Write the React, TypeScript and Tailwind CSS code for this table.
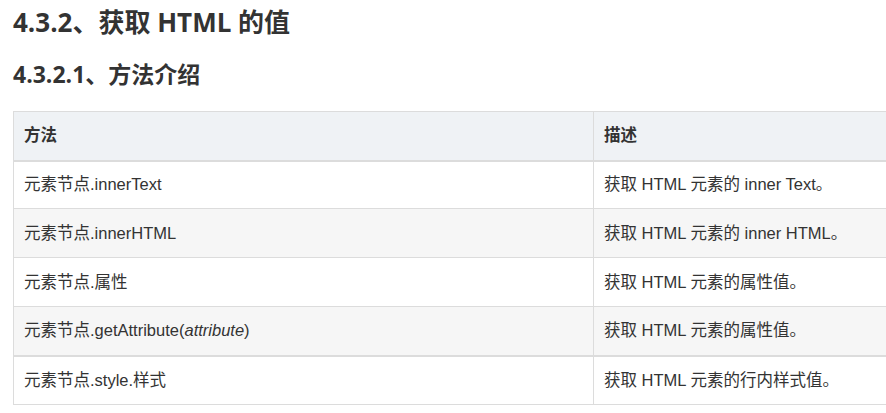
const rows = [
  { method: <>元素节点.innerText</>, desc: '获取 HTML 元素的 inner Text。' },
  { method: <>元素节点.innerHTML</>, desc: '获取 HTML 元素的 inner HTML。' },
  { method: <>元素节点.属性</>, desc: '获取 HTML 元素的属性值。' },
  {
    method: (
      <>
        元素节点.getAttribute(<em>attribute</em>)
      </>
    ),
    desc: '获取 HTML 元素的属性值。',
  },
  { method: <>元素节点.style.样式</>, desc: '获取 HTML 元素的行内样式值。' },
]

export default function App() {
  return (
    <div
      className="w-[886px] h-[413px] overflow-hidden bg-white text-[#333]"
      style={{ fontFamily: '"Open Sans", "Noto Sans CJK SC", sans-serif' }}
    >
      <h3 className="pl-[13px] pt-[6px] text-[26px] font-bold leading-[32px]">4.3.2、获取 HTML 的值</h3>
      <h4 className="pl-[13px] mt-[21px] text-[23px] font-bold leading-[30px]">4.3.2.1、方法介绍</h4>

      <table
        className="mt-[22px] ml-[13px] w-[920px] border-collapse text-[16.5px]"
        style={{ fontFamily: '"Liberation Sans", Arial, "Noto Sans CJK SC", sans-serif' }}
      >
        <thead>
          <tr className="bg-[#eff2f5]">
            <th className="h-[49px] w-[580px] border border-b-2 border-[#dcdcdc] pl-[10px] text-left font-bold">方法</th>
            <th className="h-[49px] border border-b-2 border-[#dcdcdc] pl-[10px] text-left font-bold">描述</th>
          </tr>
        </thead>
        <tbody>
          {rows.map((r, i) => {
            const cell = `${i === 0 ? 'h-[48px]' : 'h-[49px]'} border border-[#dcdcdc] pl-[10px] ${i === 3 ? 'border-b-2' : ''}`
            return (
              <tr key={i} className={i % 2 === 1 ? 'bg-[#f6f6f6]' : 'bg-white'}>
                <td className={cell}>{r.method}</td>
                <td className={cell}>{r.desc}</td>
              </tr>
            )
          })}
        </tbody>
      </table>
    </div>
  )
}
